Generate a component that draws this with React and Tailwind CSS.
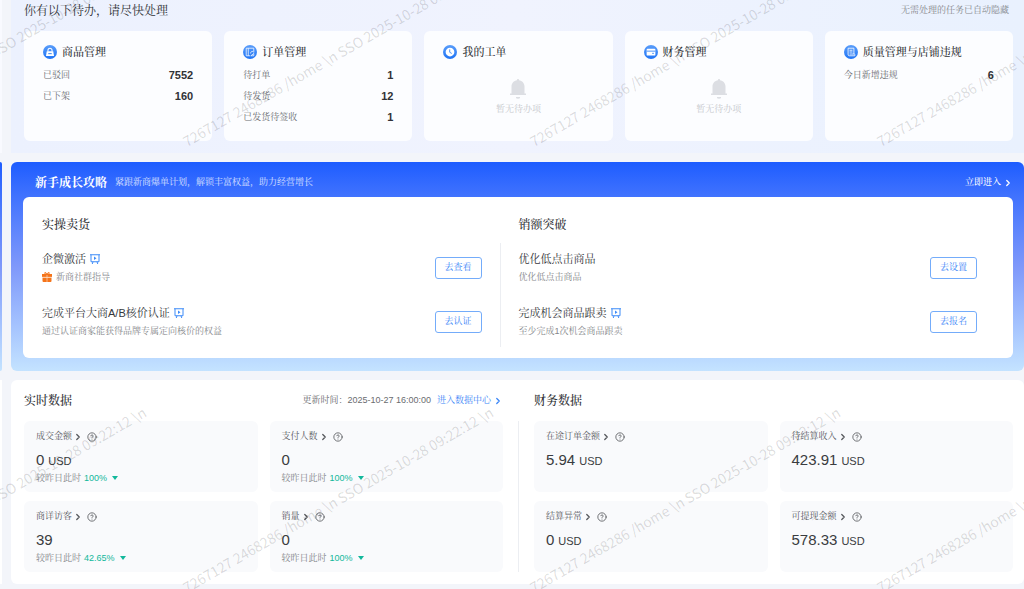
import { ChevronRight, CircleHelp } from 'lucide-react';

const todoCards = [
  { title: '商品管理', icon: 'bag', rows: [['已驳回', '7552'], ['已下架', '160']] },
  { title: '订单管理', icon: 'order', rows: [['待打单', '1'], ['待发货', '12'], ['已发货待签收', '1']] },
  { title: '我的工单', icon: 'clock', rows: [] },
  { title: '财务管理', icon: 'wallet', rows: [] },
  { title: '质量管理与店铺违规', icon: 'doc', rows: [['今日新增违规', '6']] },
];

const guides = [
  {
    title: '实操卖货',
    items: [
      { title: '企微激活', desc: '新商社群指导', action: '去查看', video: true, gift: true },
      { title: '完成平台大商A/B核价认证', desc: '通过认证商家能获得品牌专属定向核价的权益', action: '去认证', video: true },
    ],
  },
  {
    title: '销额突破',
    items: [
      { title: '优化低点击商品', desc: '优化低点击商品', action: '去设置' },
      { title: '完成机会商品跟卖', desc: '至少完成1次机会商品跟卖', action: '去报名', video: true },
    ],
  },
];

const realtimeStats = [
  { label: '成交金额', value: '0', unit: 'USD', change: '100%' },
  { label: '支付人数', value: '0', change: '100%' },
  { label: '商详访客', value: '39', change: '42.65%' },
  { label: '销量', value: '0', change: '100%' },
];

const financeStats = [
  { label: '在途订单金额', value: '5.94', unit: 'USD' },
  { label: '待结算收入', value: '423.91', unit: 'USD' },
  { label: '结算异常', value: '0', unit: 'USD' },
  { label: '可提现金额', value: '578.33', unit: 'USD' },
];

const glyphs = {
  bag: (
    <>
      <path d="M8.500 11V9a3.500 3.500 0 0 1 7 0v2" fill="none" stroke="#fff" strokeWidth="1.800" />
      <path d="M6.500 10.500h11l1.500 8.500H5z" fill="#fff" />
      <path d="M9 14.800h6" stroke="#3f8df8" strokeWidth="1.800" />
    </>
  ),
  order: (
    <g fill="none" stroke="#fff" strokeWidth="1.300">
      <path d="M5.500 5.500h13v7.500M5.500 5.500v13h7" />
      <path d="M9 5.500v13M13 14.500c0-2.500 1-3.500 4-3.500M13.500 18.500l5-4v4z" />
    </g>
  ),
  clock: (
    <>
      <circle cx="12" cy="12" r="7.500" fill="#fff" />
      <path d="M11.500 7.500v5l3.500 2" fill="none" stroke="#3f8df8" strokeWidth="1.600" />
    </>
  ),
  wallet: (
    <>
      <rect x="4.500" y="6.500" width="15" height="11.500" rx="1.500" fill="#fff" />
      <path d="M4.500 10.500h15M14 14.300h3" stroke="#3f8df8" strokeWidth="1.600" />
    </>
  ),
  doc: (
    <g fill="none" stroke="#fff" strokeWidth="1.400">
      <path d="M7 5.500h10v10M7 5.500v10c0 3 1 3 3 3h8.500c.500-1.500 0-3-.500-3H9.500" />
      <path d="M9.500 9h5M9.500 12h5" />
    </g>
  ),
};

function TodoIcon({ name }) {
  return (
    <svg viewBox="0 0 24 24" className="size-3.5 shrink-0">
      <defs>
        <linearGradient id={`todo-${name}`} x1="0" y1="0" x2="0" y2="1">
          <stop offset="0" stopColor="#5a9dfa" />
          <stop offset="1" stopColor="#1f74f5" />
        </linearGradient>
      </defs>
      <circle cx="12" cy="12" r="12" fill={`url(#todo-${name})`} />
      {glyphs[name]}
    </svg>
  );
}

function VideoIcon() {
  return (
    <svg viewBox="0 0 20 20" fill="none" stroke="#3d8bf8" strokeWidth="2" className="size-2.5">
      <path d="M0 1.500h20M2 1.500v14h16v-14M6 15.500l-1.500 4.500M14 15.500l1.500 4.500" />
      <path d="M8 5v7l5-3.500z" fill="#3d8bf8" stroke="none" />
    </svg>
  );
}

function GiftIcon() {
  return (
    <svg viewBox="0 0 20 20" className="size-2.5">
      <path d="M0 4h20v6H0zM1 11h18v7a2 2 0 0 1-2 2H3a2 2 0 0 1-2-2z" fill="#f5741a" />
      <path d="M10 4.500C5 4.500 4 1 6.500 1S10 4.500 10 4.500s1-3.500 3.500-3.500S15 4.500 10 4.500z" fill="none" stroke="#f5741a" strokeWidth="2" />
      <path d="M10 6v14M0 10.500h20" stroke="#fde3cd" strokeWidth="1.200" />
    </svg>
  );
}

function EmptyTodo() {
  return (
    <div className="mt-[19px] flex flex-col items-center text-[9px] leading-3 text-[#c6c8cc]">
      <svg viewBox="0 0 16 20" fill="#dcdee3" className="h-5 w-4">
        <path d="M8 0a1 1 0 0 1 1 1.200c3.200.600 5.500 3 5.500 6V14.500H16V16H0v-1.500h1.500V7.200c0-3 2.300-5.400 5.500-6A1 1 0 0 1 8 0z" />
        <path d="M6 18h4v.500a1.500 1 0 0 1-4 0z" />
      </svg>
      <span className="mt-1">暂无待办项</span>
    </div>
  );
}

function TodoCard({ title, icon, rows }) {
  return (
    <div className="rounded-md bg-[#fcfdff] px-[19px] py-[13px]">
      <h3 className="flex items-center gap-[5px] text-[11px] leading-4 font-medium text-[#303236]">
        <TodoIcon name={icon} />
        {title}
      </h3>
      {rows.length === 0 ? (
        <EmptyTodo />
      ) : (
        <dl className="mt-[5px]">
          {rows.map(([label, count]) => (
            <div key={label} className="flex items-center justify-between leading-[21px]">
              <dt className="text-[9px] text-[#6a6c70]">{label}</dt>
              <dd className="text-[11px] font-bold text-[#303236]">{count}</dd>
            </div>
          ))}
        </dl>
      )}
    </div>
  );
}

function GuideItem({ title, desc, action, video, gift }) {
  return (
    <li className="flex items-center justify-between">
      <div>
        <p className="flex items-center gap-1 text-[11px] leading-4 text-[#35373b]">
          {title}
          {video && <VideoIcon />}
        </p>
        <p className="mt-0.5 flex items-center gap-1 text-[9px] leading-4 text-[#85878b]">
          {gift && <GiftIcon />}
          {desc}
        </p>
      </div>
      <button type="button" className="h-[22px] w-[47px] rounded-[3px] border border-[#74acfa] bg-white text-[9px] text-[#3b86f7]">
        {action}
      </button>
    </li>
  );
}

function GuideColumn({ title, items }) {
  return (
    <div>
      <h3 className="text-xs leading-[18px] font-medium text-[#303236]">{title}</h3>
      <ul className="mt-[17px] space-y-5">
        {items.map((item) => (
          <GuideItem key={item.title} {...item} />
        ))}
      </ul>
    </div>
  );
}

function StatCard({ label, value, unit, change }) {
  return (
    <div className="min-h-[71px] rounded-md bg-[#f9fafc] px-3 py-2">
      <div className="flex h-4 items-center text-[9px] text-[#56585c]">
        <a href="#" className="flex items-center gap-px">
          {label}
          <ChevronRight className="size-2.5" strokeWidth={3} />
        </a>
        <CircleHelp className="ml-1 size-2.5" />
      </div>
      <p className="mt-[5px] text-[15px] leading-5 text-[#3a3c40]">
        {value}
        {unit && <span className="ml-1 text-[11px] leading-none">{unit}</span>}
      </p>
      {change && (
        <p className="mt-0.5 flex items-center gap-[3px] text-[9px] leading-3 text-[#85878b]">
          较昨日此时
          <span className="font-medium text-[#12b89b]">{change}</span>
          <svg viewBox="0 0 6 4" fill="#12b89b" className="ml-0.5 h-1 w-1.5">
            <path d="M0 0h6L3 4z" />
          </svg>
        </p>
      )}
    </div>
  );
}

function Watermark() {
  const rows = [145, 591];
  const columns = [-159, 188, 535, 882];

  return (
    <div aria-hidden="true" className="pointer-events-none absolute inset-0 overflow-hidden">
      {rows.map((y) =>
        columns.map((x) => (
          <span
            key={`${x}-${y}`}
            className="absolute origin-bottom-left -rotate-30 font-['Noto_Sans_CJK_SC',sans-serif] text-[14px] leading-4 whitespace-nowrap text-black/14"
            style={{ left: x, top: y - 12 }}
          >
            {'7267127 2468286 /home \\n SSO 2025-10-28 09:22:12 \\n'}
          </span>
        ))
      )}
    </div>
  );
}

function App() {
  return (
    <main
      lang="zh-CN"
      className="relative min-h-screen overflow-hidden bg-[#f3f5fa] font-['Liberation_Sans','Noto_Serif_CJK_SC','Noto_Sans_CJK_SC',sans-serif]"
    >
      <div className="flex gap-[9px]">
        <div className="w-0.5 bg-[#f9faff]" />
        <section className="flex-1 bg-linear-to-r from-[#ecf1fe] via-[#f0f3fe] to-[#e9f1fe] pr-[11px] pb-3 pl-[13px]">
          <header className="flex h-[22px] items-center justify-between">
            <h2 className="text-xs text-[#303236]">你有以下待办，请尽快处理</h2>
            <span className="mr-1 text-[9px] text-[#85878b]">无需处理的任务已自动隐藏</span>
          </header>
          <div className="mt-[9px] grid grid-cols-5 gap-3">
            {todoCards.map((card) => (
              <TodoCard key={card.title} {...card} />
            ))}
          </div>
        </section>
      </div>

      <div className="mt-[9px] flex gap-[9px]">
        <div className="w-0.5 rounded-r-md bg-linear-to-b from-[#1c5cff] via-[#7f98fa] to-[#c4e3ff]" />
        <section className="flex-1 rounded-md bg-linear-to-b from-[#1c5cff] via-[#7f98fa] to-[#c4e3ff] pr-[11px] pb-[13px] pl-3">
          <header className="flex h-[35px] items-center justify-between pt-1.5 pl-3 text-white">
            <div className="flex items-center gap-2">
              <h2 className="text-xs font-bold">新手成长攻略</h2>
              <p className="text-[9px] text-white/80">紧跟新商爆单计划，解锁丰富权益，助力经营增长</p>
            </div>
            <a href="#" className="flex items-center gap-0.5 text-[9px] font-medium">
              立即进入
              <ChevronRight className="size-2.5" strokeWidth={3} />
            </a>
          </header>
          <div className="grid grid-cols-[1fr_1px_1fr] rounded-md bg-white py-[19px] pr-9">
            <div className="pr-[18px] pl-[19px]">
              <GuideColumn {...guides[0]} />
            </div>
            <div className="mt-[27px] -mb-2 bg-[#eceef2]" />
            <div className="pl-[18px]">
              <GuideColumn {...guides[1]} />
            </div>
          </div>
        </section>
      </div>

      <div className="mt-[9px] flex gap-[9px]">
        <div className="w-0.5 bg-white" />
        <section className="flex flex-1 gap-[15px] rounded-md bg-white py-3 pr-[11px] pl-[13px]">
          <div className="flex-1">
            <header className="flex h-[18px] items-center justify-between">
              <h2 className="text-xs font-medium text-[#303236]">实时数据</h2>
              <div className="flex items-center gap-1.5 text-[9px] text-[#6a6c70]">
                <span>更新时间：2025-10-27 16:00:00</span>
                <a href="#" className="flex items-center gap-0.5 text-[#3b86f7]">
                  进入数据中心
                  <ChevronRight className="size-2.5" strokeWidth={3} />
                </a>
              </div>
            </header>
            <div className="mt-[11px] grid grid-cols-2 gap-x-3 gap-y-[9px]">
              {realtimeStats.map((stat) => (
                <StatCard key={stat.label} {...stat} />
              ))}
            </div>
          </div>
          <div className="mt-[29px] w-px bg-[#eceef2]" />
          <div className="flex-1">
            <h2 className="text-xs leading-[18px] font-medium text-[#303236]">财务数据</h2>
            <div className="mt-[11px] grid grid-cols-2 gap-x-3 gap-y-[9px]">
              {financeStats.map((stat) => (
                <StatCard key={stat.label} {...stat} />
              ))}
            </div>
          </div>
        </section>
      </div>

      <Watermark />
    </main>
  );
}

export default App;
